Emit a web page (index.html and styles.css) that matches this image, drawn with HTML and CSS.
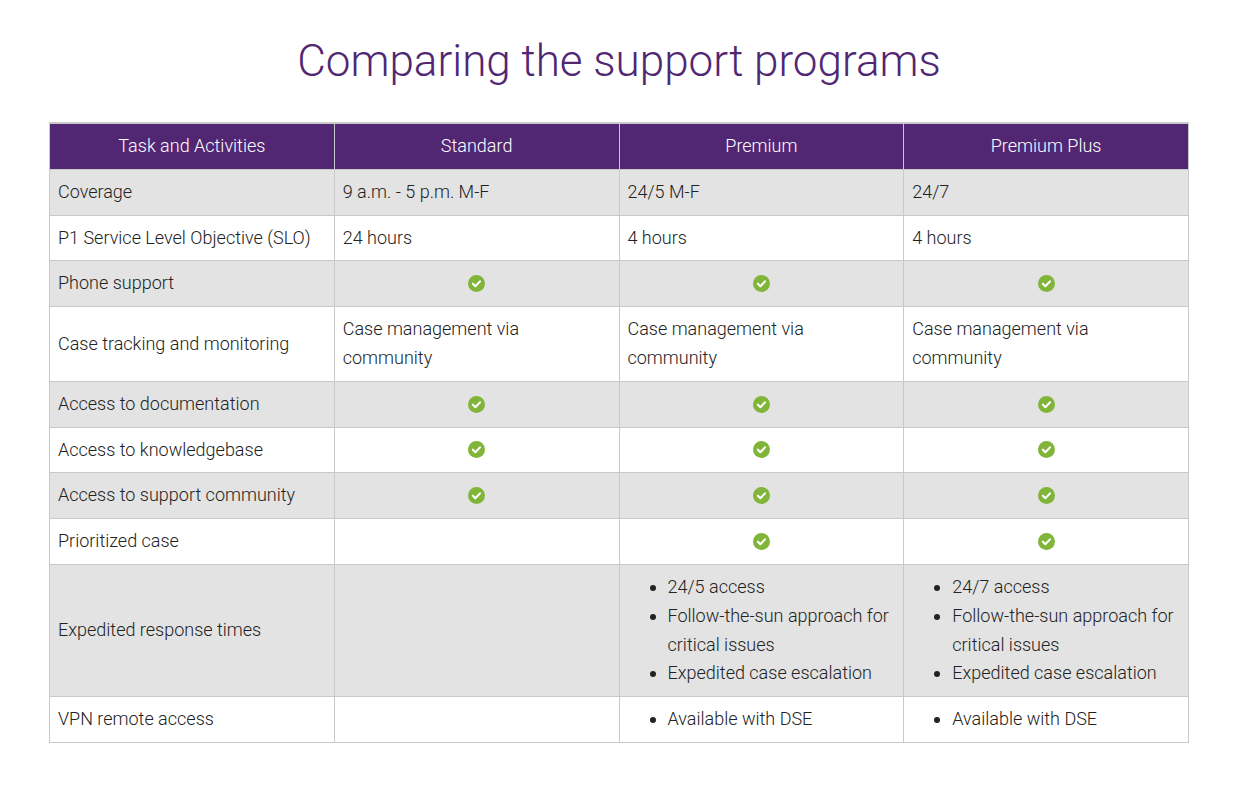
FILE: index.html
```html
<!DOCTYPE html>
<html lang="en">
<head>
<meta charset="utf-8">
<title>Comparing the support programs</title>
<link rel="stylesheet" href="styles.css">
</head>
<body>
<div class="page">
  <h1 class="title">Comparing the support programs</h1>
  <table class="compare">
    <thead>
      <tr><th>Task and Activities</th><th>Standard</th><th>Premium</th><th>Premium Plus</th></tr>
    </thead>
    <tbody>
      <tr><td>Coverage</td><td>9 a.m. - 5 p.m. M-F</td><td>24/5 M-F</td><td>24/7</td></tr>
      <tr><td>P1 Service Level Objective (SLO)</td><td>24 hours</td><td>4 hours</td><td>4 hours</td></tr>
      <tr><td>Phone support</td>
        <td class="chk"><svg class="ok" viewBox="0 0 16 16"><circle cx="8" cy="8" r="8"/><path d="M4.6 8.2l2.3 2.3 4.4-4.5"/></svg></td>
        <td class="chk"><svg class="ok" viewBox="0 0 16 16"><circle cx="8" cy="8" r="8"/><path d="M4.6 8.2l2.3 2.3 4.4-4.5"/></svg></td>
        <td class="chk"><svg class="ok" viewBox="0 0 16 16"><circle cx="8" cy="8" r="8"/><path d="M4.6 8.2l2.3 2.3 4.4-4.5"/></svg></td></tr>
      <tr><td>Case tracking and monitoring</td><td>Case management via community</td><td>Case management via community</td><td>Case management via community</td></tr>
      <tr><td>Access to documentation</td>
        <td class="chk"><svg class="ok" viewBox="0 0 16 16"><circle cx="8" cy="8" r="8"/><path d="M4.6 8.2l2.3 2.3 4.4-4.5"/></svg></td>
        <td class="chk"><svg class="ok" viewBox="0 0 16 16"><circle cx="8" cy="8" r="8"/><path d="M4.6 8.2l2.3 2.3 4.4-4.5"/></svg></td>
        <td class="chk"><svg class="ok" viewBox="0 0 16 16"><circle cx="8" cy="8" r="8"/><path d="M4.6 8.2l2.3 2.3 4.4-4.5"/></svg></td></tr>
      <tr><td>Access to knowledgebase</td>
        <td class="chk"><svg class="ok" viewBox="0 0 16 16"><circle cx="8" cy="8" r="8"/><path d="M4.6 8.2l2.3 2.3 4.4-4.5"/></svg></td>
        <td class="chk"><svg class="ok" viewBox="0 0 16 16"><circle cx="8" cy="8" r="8"/><path d="M4.6 8.2l2.3 2.3 4.4-4.5"/></svg></td>
        <td class="chk"><svg class="ok" viewBox="0 0 16 16"><circle cx="8" cy="8" r="8"/><path d="M4.6 8.2l2.3 2.3 4.4-4.5"/></svg></td></tr>
      <tr><td>Access to support community</td>
        <td class="chk"><svg class="ok" viewBox="0 0 16 16"><circle cx="8" cy="8" r="8"/><path d="M4.6 8.2l2.3 2.3 4.4-4.5"/></svg></td>
        <td class="chk"><svg class="ok" viewBox="0 0 16 16"><circle cx="8" cy="8" r="8"/><path d="M4.6 8.2l2.3 2.3 4.4-4.5"/></svg></td>
        <td class="chk"><svg class="ok" viewBox="0 0 16 16"><circle cx="8" cy="8" r="8"/><path d="M4.6 8.2l2.3 2.3 4.4-4.5"/></svg></td></tr>
      <tr><td>Prioritized case</td><td></td>
        <td class="chk"><svg class="ok" viewBox="0 0 16 16"><circle cx="8" cy="8" r="8"/><path d="M4.6 8.2l2.3 2.3 4.4-4.5"/></svg></td>
        <td class="chk"><svg class="ok" viewBox="0 0 16 16"><circle cx="8" cy="8" r="8"/><path d="M4.6 8.2l2.3 2.3 4.4-4.5"/></svg></td></tr>
      <tr><td>Expedited response times</td><td></td>
        <td><ul class="list"><li>24/5 access</li><li>Follow-the-sun approach for critical issues</li><li>Expedited case escalation</li></ul></td>
        <td><ul class="list"><li>24/7 access</li><li>Follow-the-sun approach for critical issues</li><li>Expedited case escalation</li></ul></td></tr>
      <tr><td>VPN remote access</td><td></td>
        <td><ul class="list"><li>Available with DSE</li></ul></td>
        <td><ul class="list"><li>Available with DSE</li></ul></td></tr>
    </tbody>
  </table>
</div>
</body>
</html>
```
FILE: styles.css
```css
html, body {
  margin: 0;
  padding: 0;
  background: #fff;
}
body {
  font-family: Roboto, "Liberation Sans", sans-serif;
  color: #222;
}
.page {
  width: 1140px;
  margin-left: 49px;
  padding-top: 35px;
}
.title {
  margin: 0 0 35px;
  font-size: 44px;
  font-weight: 300;
  line-height: 52px;
  color: #512773;
  text-align: center;
}
.compare {
  width: 1140px;
  border-collapse: collapse;
  table-layout: fixed;
  font-size: 18px;
  font-weight: 300;
  line-height: 1.6;
  border-top: 2px solid #c9c9c9;
}
.compare th,
.compare td {
  border: 1px solid #c9c9c9;
  padding: 8px 8px;
  vertical-align: middle;
  text-align: left;
  font-weight: 300;
}
.compare th {
  background: #512773;
  color: #fff;
  text-align: center;
  border-top: 2px solid #c9c9c9;
}
.compare tbody tr:nth-child(odd) td {
  background: #e3e3e3;
}
.compare td.chk {
  text-align: center;
  line-height: 0;
  height: 28.8px;
}
.ok {
  width: 17px;
  height: 17px;
  vertical-align: middle;
}
.ok circle {
  fill: #80b53a;
}
.ok path {
  fill: none;
  stroke: #fff;
  stroke-width: 2;
  stroke-linecap: round;
  stroke-linejoin: round;
}
.list {
  margin: 0;
  padding-left: 40px;
}
```
